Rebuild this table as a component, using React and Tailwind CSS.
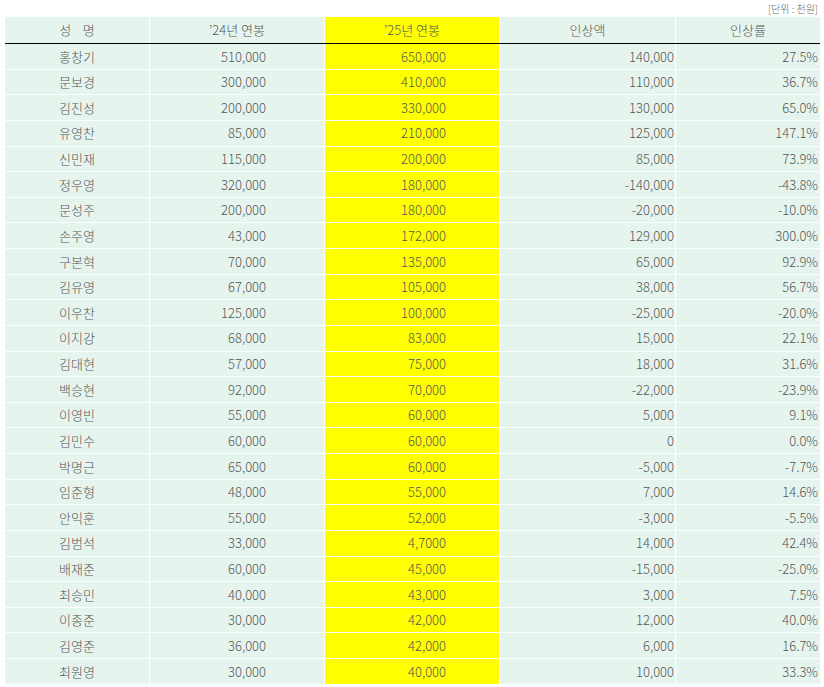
const rows = [
  ['홍창기', '510,000', '650,000', '140,000', '27.5%'],
  ['문보경', '300,000', '410,000', '110,000', '36.7%'],
  ['김진성', '200,000', '330,000', '130,000', '65.0%'],
  ['유영찬', '85,000', '210,000', '125,000', '147.1%'],
  ['신민재', '115,000', '200,000', '85,000', '73.9%'],
  ['정우영', '320,000', '180,000', '-140,000', '-43.8%'],
  ['문성주', '200,000', '180,000', '-20,000', '-10.0%'],
  ['손주영', '43,000', '172,000', '129,000', '300.0%'],
  ['구본혁', '70,000', '135,000', '65,000', '92.9%'],
  ['김유영', '67,000', '105,000', '38,000', '56.7%'],
  ['이우찬', '125,000', '100,000', '-25,000', '-20.0%'],
  ['이지강', '68,000', '83,000', '15,000', '22.1%'],
  ['김대현', '57,000', '75,000', '18,000', '31.6%'],
  ['백승현', '92,000', '70,000', '-22,000', '-23.9%'],
  ['이영빈', '55,000', '60,000', '5,000', '9.1%'],
  ['김민수', '60,000', '60,000', '0', '0.0%'],
  ['박명근', '65,000', '60,000', '-5,000', '-7.7%'],
  ['임준형', '48,000', '55,000', '7,000', '14.6%'],
  ['안익훈', '55,000', '52,000', '-3,000', '-5.5%'],
  ['김범석', '33,000', '4,7000', '14,000', '42.4%'],
  ['배재준', '60,000', '45,000', '-15,000', '-25.0%'],
  ['최승민', '40,000', '43,000', '3,000', '7.5%'],
  ['이종준', '30,000', '42,000', '12,000', '40.0%'],
  ['김영준', '36,000', '42,000', '6,000', '16.7%'],
  ['최원영', '30,000', '40,000', '10,000', '33.3%'],
];

const font = { fontFamily: '"Malgun Gothic", "Noto Sans CJK KR", sans-serif' };

export default function App() {
  return (
    <div className="w-[824px] h-[687px] bg-white text-[#555] font-light overflow-hidden" style={font}>
      <div className="flex justify-end pr-[6px] pt-[2px] h-[17px] text-[10px] leading-[13px] text-[#666]">
        [단위 : 천원]
      </div>
      <div className="ml-[5px] w-[815px] text-[13px]">
        {/* header */}
        <div className="flex h-[27px] border-b border-black bg-[#e6f4ee]">
          <div className="w-[145px] border-r border-white flex items-center justify-center">성&nbsp;&nbsp;&nbsp;&nbsp;명</div>
          <div className="w-[175px] border-r border-white flex items-center justify-center">’24년 연봉</div>
          <div className="w-[175px] border-r border-white bg-[#ffff00] flex items-center justify-center">’25년 연봉</div>
          <div className="w-[176px] border-r border-white flex items-center justify-center">인상액</div>
          <div className="w-[144px] flex items-center justify-center">인상률</div>
        </div>
        {rows.map((r, i) => (
          <div key={i} className="flex h-[25.64px] border-b border-white bg-[#e6f4ee]">
            <div className="w-[145px] border-r border-white flex items-center justify-center">{r[0]}</div>
            <div className="w-[175px] border-r border-white flex items-center justify-end pr-[58px]">{r[1]}</div>
            <div className="w-[175px] border-r border-white bg-[#ffff00] flex items-center justify-end pr-[53px]">{r[2]}</div>
            <div className="w-[176px] border-r border-white flex items-center justify-end pr-[1px]">{r[3]}</div>
            <div className="w-[144px] flex items-center justify-end pr-[2px]">{r[4]}</div>
          </div>
        ))}
      </div>
    </div>
  );
}
